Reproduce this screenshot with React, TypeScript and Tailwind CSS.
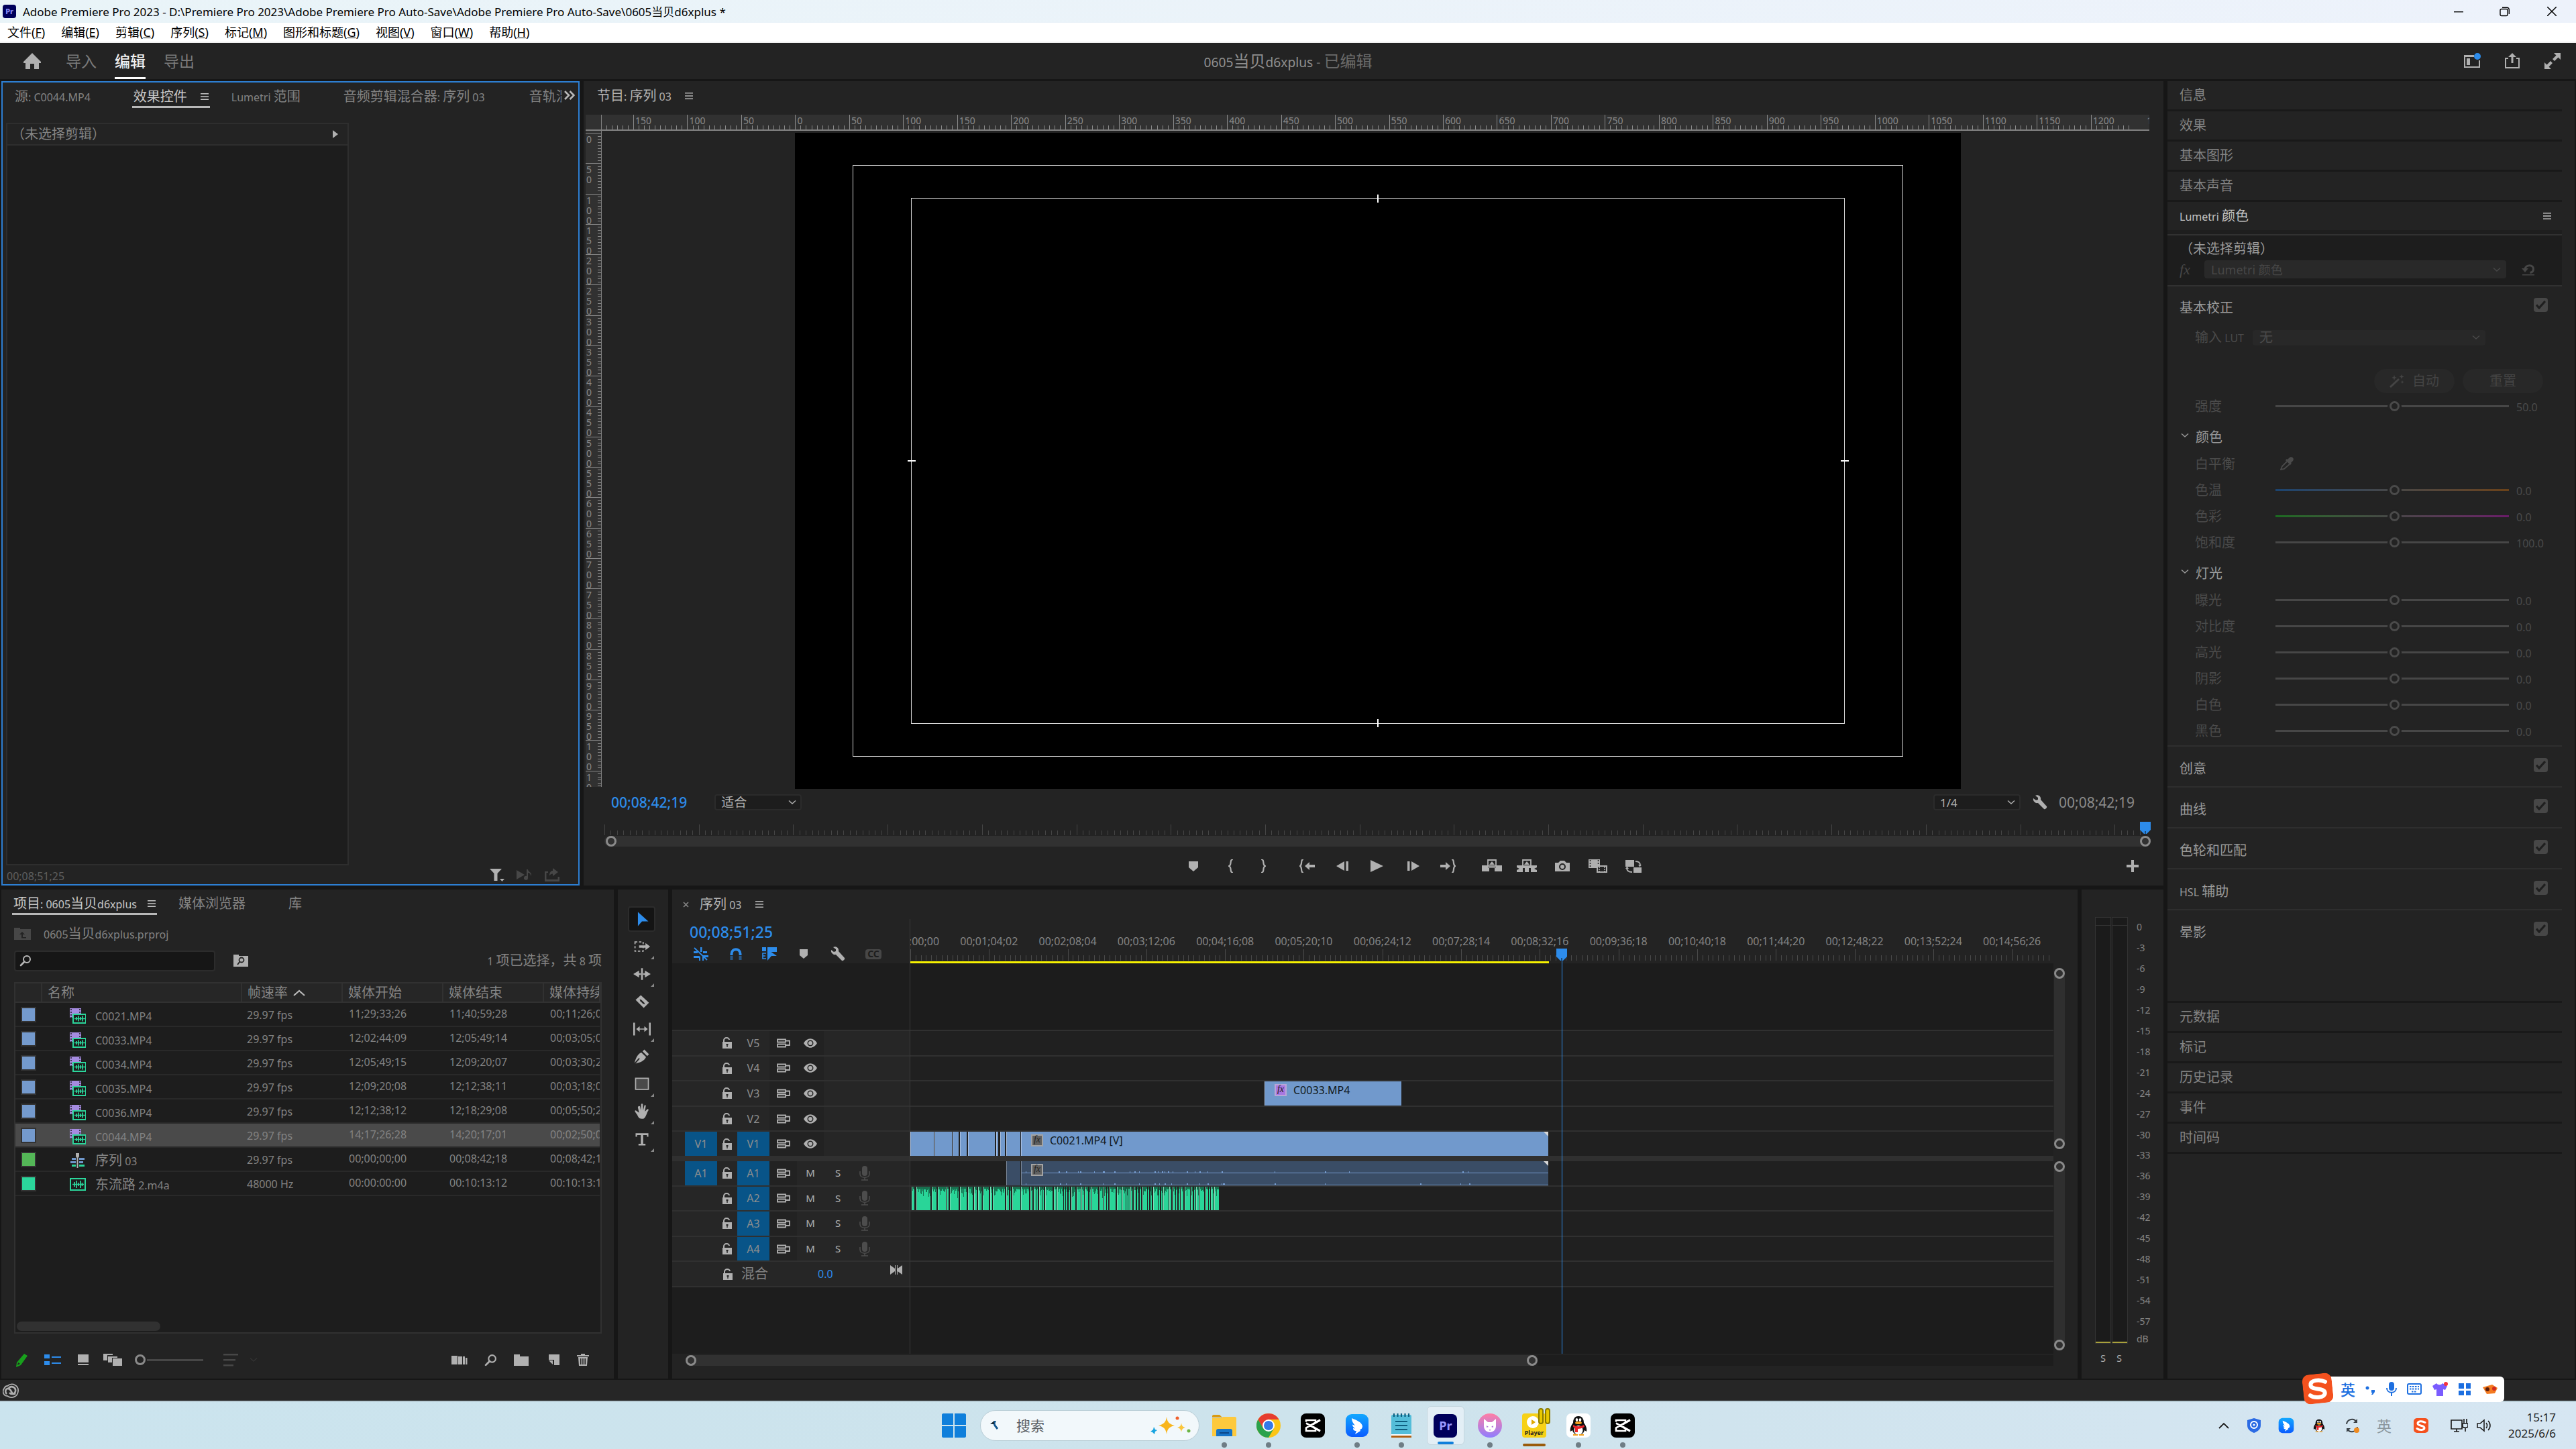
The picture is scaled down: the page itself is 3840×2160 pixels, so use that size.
import type { ReactNode } from "react";
import clsx from "clsx";

type Kids = { children?: ReactNode };

/* Latin glyphs run one step smaller than the CJK glyphs beside them. */
function Mix({ text }: { text: string }) {
  const parts = text.split(/([\u3000-\u9fff\uff00-\uffef]+)/).filter(Boolean);
  return (
    <span className="whitespace-pre">
      {parts.map((part, i) =>
        /[\u3000-\u9fff\uff00-\uffef]/.test(part) ? (
          <span key={i}>{part}</span>
        ) : (
          <span key={i} className="text-[0.8em]">
            {part}
          </span>
        ),
      )}
    </span>
  );
}

function Icon({
  w = 20,
  h = 20,
  vb,
  className,
  children,
}: Kids & { w?: number; h?: number; vb?: string; className?: string }) {
  return (
    <svg
      width={w}
      height={h}
      viewBox={vb ?? `0 0 ${w} ${h}`}
      fill="currentColor"
      className={clsx("shrink-0", className)}
      aria-hidden="true"
    >
      {children}
    </svg>
  );
}

function Burger() {
  return (
    <Icon w={12} h={12}>
      <path d="M0 1h12v1.6H0zM0 5.2h12v1.6H0zM0 9.4h12V11H0z" />
    </Icon>
  );
}

function Chevron({ className }: { className?: string }) {
  return (
    <Icon w={12} h={8} className={className}>
      <path d="M1 1.5l5 4.5 5-4.5" fill="none" stroke="currentColor" strokeWidth="1.5" />
    </Icon>
  );
}

function Ring() {
  return <span className="size-4 shrink-0 rounded-full border-3 border-[#8a8a8a]" />;
}

function Magnifier({ size = 18 }: { size?: number }) {
  return (
    <Icon w={size} h={size} vb="0 0 18 18">
      <circle cx="11" cy="7" r="5" fill="none" stroke="currentColor" strokeWidth="2" />
      <path d="M7.5 10.5L2 16" stroke="currentColor" strokeWidth="2.6" strokeLinecap="round" />
    </Icon>
  );
}

function Wrench() {
  return (
    <Icon w={22} h={22}>
      <path d="M1 5l4 3 3-1V4L4 1c4-2 9 1 8 6l9 10c1 2-2 5-4 4L8 12c-4 1-8-3-7-7z" />
    </Icon>
  );
}

const MENUS = [
  ["文件", "F"],
  ["编辑", "E"],
  ["剪辑", "C"],
  ["序列", "S"],
  ["标记", "M"],
  ["图形和标题", "G"],
  ["视图", "V"],
  ["窗口", "W"],
  ["帮助", "H"],
];

function TitleBar() {
  return (
    <header className="shrink-0 text-black">
      <div className="flex h-[34px] items-center bg-gradient-to-r from-[#e9f4f8] to-[#edf2fb] pl-1">
        <span className="flex h-5 w-5 items-center justify-center rounded bg-[#00005b] text-[11px] font-bold text-[#9999ff]">
          Pr
        </span>
        <h1 className="ml-2.5 text-[17px] leading-none">
          Adobe Premiere Pro 2023 - D:\Premiere Pro 2023\Adobe Premiere Pro Auto-Save\Adobe Premiere Pro
          Auto-Save\0605当贝d6xplus *
        </h1>
        <div className="ml-auto flex">
          <button aria-label="最小化" className="flex h-8 w-[69px] items-center justify-center">
            <Icon w={14} h={14}>
              <path d="M0 7h14v1.4H0z" />
            </Icon>
          </button>
          <button aria-label="还原" className="flex h-8 w-[69px] items-center justify-center">
            <Icon w={15} h={15}>
              <path
                d="M1 5.5a2 2 0 012-2h7a2 2 0 012 2v6a2 2 0 01-2 2H3a2 2 0 01-2-2zM4 1.2h7a3.5 3.5 0 013.3 3.5v6.3"
                fill="none"
                stroke="currentColor"
                strokeWidth="1.4"
              />
            </Icon>
          </button>
          <button aria-label="关闭" className="flex h-8 w-[72px] items-center justify-center">
            <Icon w={14} h={14}>
              <path d="M0 0l14 14M14 0L0 14" stroke="currentColor" strokeWidth="1.5" />
            </Icon>
          </button>
        </div>
      </div>
      <nav className="flex h-[30px] items-center gap-6 border-b-2 border-[#f0f0f0] bg-white pl-[11px] text-[18px] leading-none">
        {MENUS.map(([label, key]) => (
          <button key={key}>
            {label}(<u>{key}</u>)
          </button>
        ))}
      </nav>
    </header>
  );
}

function WorkspaceBar() {
  return (
    <div className="grid h-[54px] shrink-0 grid-cols-3 items-center bg-[#232323] text-[23px] leading-none text-[#7b7b7b]">
      <nav className="flex h-full items-center gap-[27px] pl-[35px]">
        <button aria-label="主页" className="mr-[10px] text-[#b0b0b0]">
          <Icon w={26} h={24}>
            <path d="M13 0l13 13v2h-3v9h-7v-8h-6v8H3v-9H0v-2z" />
          </Icon>
        </button>
        <button>导入</button>
        <button className="h-full border-y-3 border-t-transparent border-b-white font-medium text-[#efefef]">
          编辑
        </button>
        <button>导出</button>
      </nav>
      <p className="text-center text-[24px] text-[#8f8f8f]">
        <Mix text="0605当贝d6xplus" />
        <span className="text-[#6a6a6a]">
          <Mix text=" - 已编辑" />
        </span>
      </p>
      <div className="flex items-center justify-end gap-[34px] pr-[22px] text-[#b0b0b0]">
        <button aria-label="工作区">
          <Icon w={26} h={24}>
            <path d="M1 3h15v3H3v14h20V11h2v11H1z" />
            <path d="M5 8h5v10H5z" />
            <circle cx="21" cy="5" r="5" fill="#2d8ceb" />
          </Icon>
        </button>
        <button aria-label="快速导出">
          <Icon w={26} h={24}>
            <path d="M13 0l6 6h-4.5v9h-3V6H7zM2 7h5v2H4v12h18V9h-3V7h5v16H2z" />
          </Icon>
        </button>
        <button aria-label="最大化视频输出">
          <Icon w={26} h={26}>
            <path d="M15 1h10v10l-3.500-3.500L16 13l-3-3 5.500-5.500zM11 25H1V15l3.500 3.500L10 13l3 3-5.500 5.500z" />
          </Icon>
        </button>
      </div>
    </div>
  );
}

function Tab({ children, active }: Kids & { active?: boolean }) {
  return (
    <button
      className={clsx(
        "flex h-[38px] shrink-0 items-center gap-4 border-b-3 px-0.5 pt-1.5 text-[20px] leading-none whitespace-nowrap",
        active ? "border-[#b8b8b8] text-[#c8c8c8]" : "border-transparent text-[#838383]",
      )}
    >
      {children}
      {active && <Burger />}
    </button>
  );
}

function EffectControls() {
  return (
    <section className="flex min-h-0 min-w-0 flex-col border-2 border-[#2d7fd3] bg-[#232323]">
      <div className="flex h-[60px] shrink-0 items-start overflow-hidden pr-[5px] pl-4">
        <Tab>
          <Mix text="源: C0044.MP4" />
        </Tab>
        <div className="ml-[60px]">
          <Tab active>
            <span className="mr-1">效果控件</span>
          </Tab>
        </div>
        <div className="ml-[30px]">
          <Tab>
            <Mix text="Lumetri 范围" />
          </Tab>
        </div>
        <div className="ml-[60px]">
          <Tab>
            <Mix text="音频剪辑混合器: 序列 03" />
          </Tab>
        </div>
        <div className="ml-[62px] min-w-0 flex-1 overflow-hidden">
          <Tab>音轨混合器</Tab>
        </div>
        <button aria-label="更多面板" className="mt-3 ml-1 text-[#b8b8b8]">
          <Icon w={16} h={14}>
            <path d="M1 1l6 6-6 6M8.500 1l6 6-6 6" fill="none" stroke="currentColor" strokeWidth="2.600" />
          </Icon>
        </button>
      </div>
      <div className="ml-[5px] flex w-[511px] flex-1 flex-col border-2 border-[#2e2e2e] bg-[#1d1d1d]">
        <div className="flex h-8 items-center justify-between border-b-2 border-[#2e2e2e] bg-[#232323] pr-3.5 pl-1.5 text-[20px] leading-none text-[#838383]">
          <span>（未选择剪辑）</span>
          <Icon w={8} h={12} className="text-[#b0b0b0]">
            <path d="M0 0l8 6-8 6z" />
          </Icon>
        </div>
      </div>
      <footer className="flex h-[28px] shrink-0 items-center pr-[28px] pl-1.5 text-[16px] text-[#5f5f5f]">
        <span className="mr-auto pt-1">00;08;51;25</span>
        <Icon w={22} h={20} className="text-[#b0b0b0]">
          <path d="M0 1h18l-6.500 7v11h-5V8zM15 16h7l-3.500 4z" />
        </Icon>
        <Icon w={24} h={20} className="ml-[18px] text-[#474747]">
          <path d="M0 3l12 7-12 7zM15 2h2c0 4 6 4 5 9h-1c0-3-2-4-4-4v8a3 3 0 11-2-3z" />
        </Icon>
        <Icon w={22} h={20} className="ml-[18px] text-[#474747]">
          <path d="M0 5h5v2H2.500v10h17v-4H22v7H0zM12 0l8 6-8 6V8.500c-2 0-4 1-5 3 0-5 2-7.500 5-7.500z" />
        </Icon>
      </footer>
    </section>
  );
}

/* Tick marks spaced `step` percent apart; every `every`-th is a tall one. */
function Ticks({
  count,
  step,
  every,
  offset = 0,
  short = 6,
  tall = 24,
  vertical,
}: {
  count: number;
  step: number;
  every: number;
  offset?: number;
  short?: number;
  tall?: number;
  vertical?: boolean;
}) {
  return (
    <svg className="absolute inset-0 size-full" shapeRendering="crispEdges" aria-hidden="true">
      {Array.from({ length: count }, (_, i) => {
        const p = offset + i * step;
        const len = i % every === 0 ? tall : short;
        return vertical ? (
          <rect key={i} y={`${p}%`} x={24 - len} width={len} height="1" fill="currentColor" />
        ) : (
          <rect key={i} x={`${p}%`} y={tall - len} height={len} width="1" fill="currentColor" />
        );
      })}
    </svg>
  );
}

const RULER_X = Array.from({ length: 29 }, (_, i) => Math.abs(i * 50 - 150));
const RULER_Y = Array.from({ length: 22 }, (_, i) => i * 50);

function SafeMargins() {
  return (
    <div className="relative h-full aspect-video bg-black">
      <svg className="absolute inset-0 size-full" shapeRendering="crispEdges" aria-hidden="true">
        <g fill="none" stroke="#d8d8d8">
          <rect x="5%" y="5%" width="90%" height="90%" />
          <rect x="10%" y="10%" width="80%" height="80%" />
        </g>
        <g stroke="#ffffff" strokeWidth="2">
          <svg x="50%" y="10%" overflow="visible">
            <path d="M0-6V6" />
          </svg>
          <svg x="50%" y="90%" overflow="visible">
            <path d="M0-6V6" />
          </svg>
          <svg x="10%" y="50%" overflow="visible">
            <path d="M-6 0H6" />
          </svg>
          <svg x="90%" y="50%" overflow="visible">
            <path d="M-6 0H6" />
          </svg>
        </g>
      </svg>
    </div>
  );
}

const TRANSPORT: { label: string; w: number; gap: number; icon: ReactNode }[] = [
  { label: "添加标记", w: 14, gap: 0, icon: <path d="M0 3h14v9l-7 6-7-6z" /> },
  {
    label: "标记入点",
    w: 8,
    gap: 45,
    icon: <path d="M7 0C1 0 6 8 1 10c5 2 0 10 6 10" fill="none" stroke="currentColor" strokeWidth="2.200" />,
  },
  {
    label: "标记出点",
    w: 8,
    gap: 40,
    icon: <path d="M1 0c6 0 1 8 6 10-5 2 0 10-6 10" fill="none" stroke="currentColor" strokeWidth="2.200" />,
  },
  {
    label: "转到入点",
    w: 24,
    gap: 50,
    icon: (
      <>
        <path d="M6 0C1 0 5 8 1 10c4 2 0 10 5 10" fill="none" stroke="currentColor" strokeWidth="2.200" />
        <path d="M8 10l7-6v4h8v4h-8v4z" />
      </>
    ),
  },
  { label: "后退一帧", w: 18, gap: 31, icon: <path d="M0 10l12-7v14zM14.500 3H18v14h-3.500z" /> },
  { label: "播放", w: 20, gap: 32, icon: <path d="M1 1l19 9-19 9z" /> },
  { label: "前进一帧", w: 18, gap: 36, icon: <path d="M18 10L6 3v14zM0 3h3.500v14H0z" /> },
  {
    label: "转到出点",
    w: 24,
    gap: 30,
    icon: (
      <>
        <path d="M18 0c5 0 1 8 5 10-4 2 0 10-5 10" fill="none" stroke="currentColor" strokeWidth="2.200" />
        <path d="M16 10L9 4v4H1v4h8v4z" />
      </>
    ),
  },
  {
    label: "提升",
    w: 30,
    gap: 39,
    icon: (
      <>
        <path d="M0 9h9v3h12V9h9v9H19v-5h-8v5H0z" />
        <path d="M9 1h12v9H9z" fill="none" stroke="currentColor" strokeWidth="1.800" />
        <path d="M15 3l4 5h-8z" />
      </>
    ),
  },
  {
    label: "提取",
    w: 30,
    gap: 22,
    icon: (
      <>
        <path d="M0 9h30v3l-4 2 4 2v3h-9v-6h-3v6h-6v-6H9v6H0v-3l4-2-4-2z" />
        <path d="M9 1h12v9H9z" fill="#232323" stroke="currentColor" strokeWidth="1.800" />
        <path d="M15 3l4 5h-8z" />
      </>
    ),
  },
  {
    label: "导出帧",
    w: 22,
    gap: 27,
    icon: (
      <>
        <path d="M0 5h5l3-3h6l3 3h5v13H0z" />
        <circle cx="11" cy="11" r="4" fill="none" stroke="#232323" strokeWidth="2" />
      </>
    ),
  },
  {
    label: "比较视图",
    w: 28,
    gap: 28,
    icon: (
      <>
        <path d="M0 0h17v13H0z" />
        <path d="M2.500 1v12M14.500 1v12" stroke="#232323" strokeWidth="1.500" strokeDasharray="2 2" />
        <path d="M13 10h14v9H13z" fill="#232323" stroke="currentColor" strokeWidth="2" />
        <path d="M16 11v8M24 11v8" stroke="currentColor" strokeWidth="1.500" strokeDasharray="2 1" />
      </>
    ),
  },
  {
    label: "切换代理",
    w: 24,
    gap: 27,
    icon: (
      <>
        <path d="M0 1h13v10H0zM12 12h12v8H12z" />
        <path d="M15 3c5 0 7 2 7 6M2 13c0 3 2 6 8 6" fill="none" stroke="currentColor" strokeWidth="1.800" />
        <path d="M19 8h5l-2.500 3.500zM0 14l2.500-3.500L5 14z" />
      </>
    ),
  },
];

function PlayheadMark({ className }: { className?: string }) {
  return (
    <Icon w={16} h={18} className={clsx("text-[#2d8ceb]", className)}>
      <path d="M0 0h16v12l-6 6H6l-6-6z" />
      <path d="M7.500 14h1v4h-1z" fill="#111" />
    </Icon>
  );
}

function DropDown({ label, options, className }: { label: string; options: string[]; className: string }) {
  return (
    <span className="relative flex items-center">
      <select aria-label={label} className={clsx("appearance-none", className)}>
        {options.map((o) => (
          <option key={o}>{o}</option>
        ))}
      </select>
      <Chevron className="pointer-events-none absolute right-2" />
    </span>
  );
}

function ProgramMonitor() {
  return (
    <section className="flex min-h-0 min-w-0 flex-col bg-[#232323]">
      <div className="flex h-[50px] shrink-0 items-center gap-5 pb-1.5 pl-5 text-[20px] leading-none text-[#b4b4b4]">
        <Mix text="节目: 序列 03" />
        <Burger />
      </div>
      <div className="mr-[21px] ml-[3px] flex h-6 shrink-0 bg-[#313131] text-[14px] leading-[17px] text-[#8a8a8a]">
        <div className="w-6 shrink-0 border-r border-b-2 border-[#808080]" />
        <div className="relative flex flex-1 overflow-hidden border-b-2 border-[#808080] pl-[46px]">
          <Ticks count={288} step={0.3488} every={10} offset={-1.451} short={8} />
          {RULER_X.map((n, i) => (
            <span key={i} className="w-[3.559%] shrink-0 pl-1">
              {n}
            </span>
          ))}
        </div>
      </div>
      <div className="flex min-h-0 flex-1">
        <div className="mb-[3px] ml-[3px] flex w-6 shrink-0 flex-col overflow-hidden border-r border-[#808080] bg-[#313131] pt-[3px]">
          <div className="relative min-h-0 flex-1 text-[14px] text-[#8a8a8a]">
            <Ticks vertical count={216} step={0.4643} every={10} />
            {RULER_Y.map((n) => (
              <div key={n} className="h-[4.643%] overflow-hidden pt-0.5 pl-px">
                {String(n)
                  .split("")
                  .map((d, i) => (
                    <span key={i} className="block leading-[15px]">
                      {d}
                    </span>
                  ))}
              </div>
            ))}
          </div>
        </div>
        <div className="mr-3.5 flex min-w-0 flex-1 justify-center pt-[3px]">
          <SafeMargins />
        </div>
      </div>
      <div className="flex h-10 shrink-0 items-center pr-[43px] pl-[41px] text-[21px] leading-none text-[#8a8a8a]">
        <span className="font-medium text-[#2d8ceb]">00;08;42;19</span>
        <div className="ml-[41px] text-[#b0b0b0]">
          <DropDown
            label="选择缩放级别"
            options={["适合"]}
            className="h-6 w-[130px] rounded-sm border-2 border-[#2b2b2b] bg-[#1d1d1d] pl-2 text-[19px] leading-none"
          />
        </div>
        <div className="ml-auto text-[#b0b0b0]">
          <DropDown
            label="选择回放分辨率"
            options={["1/4"]}
            className="h-6 w-[130px] rounded-sm border-2 border-[#2b2b2b] bg-[#1d1d1d] pl-2 text-[17px] leading-none"
          />
        </div>
        <button aria-label="设置" className="mr-[17px] ml-[18px] text-[#b0b0b0]">
          <Wrench />
        </button>
        <span>00;08;42;19</span>
      </div>
      <div className="relative mt-[13px] mr-[21px] mb-px ml-[31px] h-4 shrink-0 text-[#454545]">
        <Ticks count={245} step={0.4073} every={15} short={7} tall={16} />
        <PlayheadMark className="absolute -top-1 -right-0.5" />
      </div>
      <div className="mr-[19px] ml-[31px] flex h-4 shrink-0 items-center justify-between rounded-full bg-[#313131] pl-0.5">
        <Ring />
        <Ring />
      </div>
      <div className="flex h-[58px] shrink-0 items-center text-[#b0b0b0]">
        <div className="w-[38.3%] shrink-0" />
        {TRANSPORT.map((t) => (
          <button key={t.label} aria-label={t.label} style={{ marginLeft: t.gap }}>
            <Icon w={t.w} h={20}>
              {t.icon}
            </Icon>
          </button>
        ))}
        <button aria-label="按钮编辑器" className="mr-[37px] ml-auto">
          <Icon w={18} h={18}>
            <path d="M7 0h4v7h7v4h-7v7H7v-7H0V7h7z" />
          </Icon>
        </button>
      </div>
    </section>
  );
}

function ClipIcon() {
  return (
    <Icon w={24} h={24}>
      <path d="M0 1h17v14H0z" fill="#a58be0" />
      <path d="M2 2v13M15 2v7" stroke="#1d1d1d" strokeWidth="1.500" strokeDasharray="2 2" />
      <path d="M5 10h19v13H5z" fill="#1d1d1d" stroke="#2bd69b" strokeWidth="2" />
      <path d="M7 16.500h16M10 14v5M13 12.500v8M16 14v5M19 12.500v8" stroke="#2bd69b" strokeWidth="1.700" />
    </Icon>
  );
}

function SequenceIcon() {
  return (
    <Icon w={24} h={24}>
      <path d="M3 8h6v3H3zM14 8h8v3h-8z" fill="#6f97cb" />
      <path d="M1 13h8v3H1zM14 13h6v3h-6z" fill="#6f97cb" />
      <path d="M3 18h6v3H3zM14 18h8v3h-8z" fill="#2bd69b" />
      <path d="M9 1h5v5l-1.500 2v15h-2V8L9 6z" fill="#b0b0b0" />
    </Icon>
  );
}

function AudioIcon() {
  return (
    <Icon w={24} h={20}>
      <path d="M1 1h22v17H1z" fill="#1d1d1d" stroke="#2bd69b" strokeWidth="2" />
      <path d="M4 9.500h17M7 6v7M10 4v11M13 7v5M16 4v11M18.500 7v5" stroke="#2bd69b" strokeWidth="1.700" />
    </Icon>
  );
}

const CLIPS = [
  { name: "C0021.MP4", rate: "29.97 fps", start: "11;29;33;26", end: "11;40;59;28", length: "00;11;26;03" },
  { name: "C0033.MP4", rate: "29.97 fps", start: "12;02;44;09", end: "12;05;49;14", length: "00;03;05;06" },
  { name: "C0034.MP4", rate: "29.97 fps", start: "12;05;49;15", end: "12;09;20;07", length: "00;03;30;23" },
  { name: "C0035.MP4", rate: "29.97 fps", start: "12;09;20;08", end: "12;12;38;11", length: "00;03;18;04" },
  { name: "C0036.MP4", rate: "29.97 fps", start: "12;12;38;12", end: "12;18;29;08", length: "00;05;50;27" },
  { name: "C0044.MP4", rate: "29.97 fps", start: "14;17;26;28", end: "14;20;17;01", length: "00;02;50;04" },
  { name: "序列 03", rate: "29.97 fps", start: "00;00;00;00", end: "00;08;42;18", length: "00;08;42;19" },
  { name: "东流路 2.m4a", rate: "48000 Hz", start: "00:00:00:00", end: "00:10:13:12", length: "00:10:13:13" },
];

function ProjectPanel() {
  return (
    <section className="flex min-h-0 min-w-0 flex-col bg-[#232323] text-[20px] leading-none text-[#838383]">
      <div className="flex h-[49px] shrink-0 items-start pl-4">
        <Tab active>
          <Mix text="项目: 0605当贝d6xplus" />
        </Tab>
        <div className="ml-[30px]">
          <Tab>媒体浏览器</Tab>
        </div>
        <div className="ml-[60px]">
          <Tab>库</Tab>
        </div>
      </div>
      <div className="flex h-[33px] shrink-0 items-center gap-[19px] pl-[19px]">
        <Icon w={25} h={20} className="text-[#474747]">
          <path d="M0 1h9v2h16v16H0z" />
          <path d="M8 11l4-4 4 4h-3v4h5v1.500h-7V11z" fill="#232323" />
        </Icon>
        <Mix text="0605当贝d6xplus.prproj" />
      </div>
      <div className="flex h-[48px] shrink-0 items-center pr-[18px] pl-[19px]">
        <label className="flex h-[31px] w-[300px] items-center gap-2 rounded border-2 border-[#2c2c2c] bg-[#161616] px-1.5 text-[#b8b8b8]">
          <Magnifier />
          <input aria-label="搜索" type="text" className="w-full bg-transparent text-[16px] outline-none" />
        </label>
        <button aria-label="从查询创建新的搜索素材箱" className="ml-[27px] text-[#b0b0b0]">
          <Icon w={22} h={18}>
            <path d="M0 0h8v2h14v16H0z" />
            <circle cx="12" cy="8" r="3.500" fill="none" stroke="#232323" strokeWidth="1.800" />
            <path d="M9.500 10.500L6 15" stroke="#232323" strokeWidth="2" />
          </Icon>
        </button>
        <span className="ml-auto">
          <Mix text="1 项已选择，共 8 项" />
        </span>
      </div>
      <div className="mt-2 mr-[18px] ml-[19px] flex min-h-0 flex-1 flex-col justify-between overflow-hidden border-2 border-[#313131] bg-[#1d1d1d]">
        <table className="w-full table-fixed border-collapse text-left">
          <colgroup>
            <col className="w-[39px]" />
            <col />
            <col className="w-[150px]" />
            <col className="w-[150px]" />
            <col className="w-[150px]" />
            <col className="w-[84px]" />
          </colgroup>
          <thead>
            <tr className="h-7 border-b-2 border-[#313131] bg-[#262626] *:border-r-2 *:border-[#313131] *:pl-2 *:font-normal *:whitespace-nowrap">
              <th />
              <th>名称</th>
              <th>
                <span className="flex items-center gap-2">
                  帧速率
                  <Icon w={18} h={10} className="text-[#b8b8b8]">
                    <path d="M1 9l8-7 8 7" fill="none" stroke="currentColor" strokeWidth="2.200" />
                  </Icon>
                </span>
              </th>
              <th>媒体开始</th>
              <th>媒体结束</th>
              <th className="overflow-hidden">媒体持续时间</th>
            </tr>
          </thead>
          <tbody className="text-[16px]">
            {CLIPS.map((clip, i) => (
              <tr
                key={clip.name}
                className={clsx(
                  "h-9 border-b-2 border-[#292929] *:whitespace-nowrap",
                  i === 5 && "bg-[#4a4a4a]",
                )}
              >
                <td className="pl-2">
                  <span
                    className={clsx(
                      "block size-[23px] border-2 border-[#333333]",
                      i < 6 ? "bg-[#749acd]" : i === 6 ? "bg-[#54b757]" : "bg-[#2bd69b]",
                    )}
                  />
                </td>
                <td className="pl-[42px]">
                  <span className="flex items-center gap-3.5 pt-1 text-[20px]">
                    {i < 6 ? <ClipIcon /> : i === 6 ? <SequenceIcon /> : <AudioIcon />}
                    <Mix text={clip.name} />
                  </span>
                </td>
                <td className="pt-0.5 pl-2">{clip.rate}</td>
                <td className="pb-0.5 pl-2.5">{clip.start}</td>
                <td className="pb-0.5 pl-2.5">{clip.end}</td>
                <td className="overflow-hidden pb-0.5 pl-2.5">{clip.length}</td>
              </tr>
            ))}
          </tbody>
        </table>
        <div className="m-0.5 h-3.5 w-[214px] rounded-full bg-[#313131]" />
      </div>
      <footer className="flex h-[67px] shrink-0 items-center pt-[11px] pr-[37px] pl-5 text-[#b0b0b0]">
        <Icon w={22} h={22} className="text-[#18a01c]">
          <path d="M14 2l5 3L9 19l-7 3 1-7zM5 15l-1 4 4-2z" fillRule="evenodd" />
        </Icon>
        <Icon w={26} h={18} className="ml-[22px] text-[#2d8ceb]">
          <path d="M0 1h8v6H0zM0 11h8v6H0zM11 4h14v2H11zM11 13h14v2H11z" />
        </Icon>
        <Icon w={16} h={18} className="ml-[24px]">
          <path d="M0 1h16v12H0zM0 15h16v2H0z" />
        </Icon>
        <Icon w={28} h={18} className="ml-[22px]">
          <path d="M0 0h14v2H6v8H0zM7 4h14v2h-8v7H7zM14 7h14v11H14z" />
        </Icon>
        <span className="ml-[19px] flex items-center gap-0.5">
          <Ring />
          <span className="h-[3px] w-[84px] bg-[#474747]" />
        </span>
        <Icon w={22} h={20} className="ml-[30px] text-[#474747]">
          <path d="M0 1h22v2.500H0zM0 9h18v2.500H0zM0 17h15v2.500H0z" />
        </Icon>
        <Chevron className="ml-[17px] text-[#333333]" />
        <div className="ml-auto flex items-center gap-[25px]">
          <Icon w={24} h={14}>
            <path d="M0 1h9v13H0zM10 2h6v12h-6zM17 2h3v12h-3zM21 4h2.500v10H21z" />
          </Icon>
          <Magnifier size={19} />
          <Icon w={22} h={17}>
            <path d="M0 0h9v3h13v14H0z" />
          </Icon>
          <Icon w={18} h={18} className="ml-1">
            <path d="M1 1h16v16H9V9H1zM1 10h6v6z" />
          </Icon>
          <Icon w={18} h={20}>
            <path d="M6 1h6v2h6v2H0V3h6zM2 6h14l-1 13H3zm3 2v9h1.500V8zm3.200 0v9h1.500V8zm3.200 0v9H13V8z" fillRule="evenodd" />
          </Icon>
        </div>
      </footer>
    </section>
  );
}

const TOOLS: { label: string; corner: boolean; icon: ReactNode }[] = [
  { label: "选择工具", corner: false, icon: <path d="M8 3l18 16H15L8 27z" /> },
  {
    label: "向前选择轨道工具",
    corner: true,
    icon: (
      <>
        <path d="M3 7h14v16H3z" fill="none" stroke="currentColor" strokeWidth="2" strokeDasharray="4 3" />
        <path d="M10 13h11V9l8 6-8 6v-4H10z" />
      </>
    ),
  },
  {
    label: "波纹编辑工具",
    corner: true,
    icon: <path d="M13.500 5h3v20h-3zM0 15l10-6v4.500h3v3h-3V21zM30 15l-10-6v4.500h-3v3h3V21z" />,
  },
  {
    label: "剃刀工具",
    corner: false,
    icon: (
      <>
        <path d="M13 4l14 13-9 9L4 12z" />
        <path d="M11 11l3 1 5 5 1 3-3-1-5-5z" fill="#232323" />
      </>
    ),
  },
  {
    label: "外滑工具",
    corner: true,
    icon: <path d="M0 4h3v22H0zM27 4h3v22h-3zM5 15l6-5v4h8v-4l6 5-6 5v-4h-8v4z" />,
  },
  {
    label: "钢笔工具",
    corner: false,
    icon: (
      <>
        <path d="M19 3l8 8-3 3-8-8zM14 8l8 8c-3 6-8 9-18 11l7-8-1-2-8 9C5 16 8 10 14 8z" />
      </>
    ),
  },
  {
    label: "矩形工具",
    corner: true,
    icon: <path d="M4 5h22v19H4z" fill="#4a4a4a" stroke="currentColor" strokeWidth="2" />,
  },
  {
    label: "手形工具",
    corner: true,
    icon: (
      <path d="M9 6c2-1 3 0 3 2l1 5 .500-10c0-2 3-2 3 0l.500 10 2-8c.500-2 3-1.500 2.500.500L20 15l4-4c1.500-1 3 .500 2 2-3 4-4 12-8 14-5 1-8 0-10-4-1-3-4-6-5-8s1-3 3-1l4 3-2-9c0-1 0-2 1-2z" />
    ),
  },
  { label: "文字工具", corner: true, icon: <path d="M4 5h22v6h-2.500V8H17v15h4v3H9v-3h4V8H6.500v3H4z" /> },
];

function ToolStrip() {
  return (
    <section aria-label="工具" className="flex flex-col items-center gap-[3px] bg-[#232323] pt-[25px] pr-1">
      {TOOLS.map((tool, i) => (
        <button
          key={tool.label}
          aria-label={tool.label}
          className={clsx(
            "relative flex h-[38px] w-[41px] items-center justify-center rounded",
            i === 0 ? "border-2 border-[#2c2c2c] bg-[#141414] text-[#2d8ceb]" : "text-[#b0b0b0]",
          )}
        >
          <Icon w={28} h={26} vb="0 0 30 30">
            {tool.icon}
          </Icon>
          {tool.corner && (
            <Icon w={5} h={5} className="absolute right-0.5 bottom-0 text-[#8a8a8a]">
              <path d="M5 0v5H0z" />
            </Icon>
          )}
        </button>
      ))}
    </section>
  );
}

function Lock() {
  return (
    <Icon w={14} h={17}>
      <path d="M2 7V5a4 4 0 014-4c3 0 4 2 4 3" fill="none" stroke="currentColor" strokeWidth="2" />
      <path d="M0 7h14v10H0z" />
      <path d="M5.500 10h3v2l-.800.500V15H6.300v-2.500L5.500 12z" fill="#262626" />
    </Icon>
  );
}

function SyncLock() {
  return (
    <Icon w={20} h={14}>
      <g fill="none" stroke="currentColor" strokeWidth="1.800">
        <path d="M1 1.500h12v4H1zM1 8.500h12v4H1z" />
        <path d="M13 3.500h6v6.500h-6" />
      </g>
    </Icon>
  );
}

function Eye() {
  return (
    <Icon w={20} h={14}>
      <path d="M0 7c5-9 15-9 20 0-5 9-15 9-20 0zM10 2.500a4.500 4.500 0 100 9 4.500 4.500 0 000-9z" fillRule="evenodd" />
      <circle cx="10" cy="7" r="3" />
    </Icon>
  );
}

function Mic() {
  return (
    <Icon w={16} h={22}>
      <rect x="4" y="0" width="8" height="15" rx="4" />
      <path d="M1 8v4c0 7 14 7 14 0V8M8 17v4M3 21h10" fill="none" stroke="currentColor" strokeWidth="1.500" />
    </Icon>
  );
}

function TrackHeader({ name, source, target }: { name: string; source?: boolean; target?: boolean }) {
  const audio = name.startsWith("A");
  return (
    <div className="flex min-h-0 flex-1 items-stretch border-b-2 border-[#303030] bg-[#262626] pl-[19px] text-[16px] leading-none text-[#8f8f8f] *:flex *:shrink-0 *:items-center *:justify-center">
      <button className={clsx("w-12", source && "bg-[#085488]")}>{source && name}</button>
      <button aria-label={`切换轨道锁定 ${name}`} className="w-[30px] text-[#b0b0b0]">
        <Lock />
      </button>
      <button className={clsx("w-12", target && "bg-[#085488]")}>{name}</button>
      <button aria-label={`同步锁定 ${name}`} className="w-[41px] bg-[#222222] text-[#b0b0b0]">
        <SyncLock />
      </button>
      {audio ? (
        <>
          <button className="w-10 text-[15px] text-[#b0b0b0]">M</button>
          <button className="w-[42px] text-[15px] text-[#b0b0b0]">S</button>
          <button aria-label={`画外音录制 ${name}`} className="w-[38px] text-[#4d4d4d]">
            <Mic />
          </button>
        </>
      ) : (
        <button aria-label={`切换轨道输出 ${name}`} className="w-10 bg-[#222222] text-[#b0b0b0]">
          <Eye />
        </button>
      )}
    </div>
  );
}

function FxBadge({ accent }: { accent?: boolean }) {
  return (
    <span
      className={clsx(
        "flex size-[18px] items-center justify-center border-2 pb-0.5 font-['Liberation_Serif',serif] text-[14px] leading-none italic text-[#222222]",
        accent ? "border-[#b9a6d8] bg-[#a876e0]" : "border-[#a3a3a3] bg-[#606060]",
      )}
    >
      fx
    </span>
  );
}

/* Every position on the canvas is in timeline units; 1704 of them span it. */
const SPAN = 1704;
const pct = (n: number) => `${(n / SPAN) * 100}%`;

const V1_CUTS = [
  [0, 35],
  [36, 26],
  [63, 9],
  [74, 10],
  [86, 40],
  [128, 3],
  [134, 7],
  [143, 21],
];

const TIMES = [
  "00;00;00;00",
  "00;01;04;02",
  "00;02;08;04",
  "00;03;12;06",
  "00;04;16;08",
  "00;05;20;10",
  "00;06;24;12",
  "00;07;28;14",
  "00;08;32;16",
  "00;09;36;18",
  "00;10;40;18",
  "00;11;44;20",
  "00;12;48;22",
  "00;13;52;24",
  "00;14;56;26",
];

const MUSIC_HEAD = [
  [2, 4],
  [9, 21],
  [32, 7],
  [41, 12],
  [54, 3],
  [59, 13],
  [74, 10],
  [86, 7],
  [95, 4],
  [101, 4],
  [106, 1],
  [108, 9],
  [119, 3],
  [123, 18],
  [143, 4],
  [149, 1],
  [152, 12],
  [165, 12],
];

function MusicWave() {
  let seed = 11;
  const next = () => (seed = (seed * 73 + 41) % 1009) / 1009;
  const blocks = MUSIC_HEAD.map((b) => [...b]);
  for (let x = 179; x < 458; ) {
    const w = Math.min(2 + Math.floor(next() * next() * 12), 463 - x);
    blocks.push([x, w]);
    x += w + 1 + Math.floor(next() * 2);
  }
  return (
    <svg
      className="absolute inset-y-0 left-0 h-full"
      style={{ width: pct(464) }}
      viewBox="0 0 464 37"
      preserveAspectRatio="none"
      shapeRendering="crispEdges"
      aria-hidden="true"
    >
      {blocks.map(([x, w]) => (
        <g key={x}>
          <rect x={x} width={w} height="37" fill="#17704f" />
          {Array.from({ length: w }, (_, i) => {
            const top = 3 + Math.floor(next() * next() * 16);
            return <rect key={i} x={x + i} y={top} width="1" height={37 - top} fill="#29d598" />;
          })}
          {w > 2 && <rect x={x} width="1" height="37" fill="#7fdcb8" />}
        </g>
      ))}
    </svg>
  );
}

const PEAKS_A = [6, 55, 56, 66, 84, 87, 108, 121, 123, 138, 161, 168, 175, 198, 203, 209, 213, 218, 225, 246, 258, 265, 277, 298, 377, 453, 489, 658, 666];
const PEAKS_B = [6, 57, 66, 87, 121, 138, 175, 198, 205, 213, 223, 246, 265, 277, 298, 300, 302, 377, 453, 595, 655, 668];

function A1Wave() {
  return (
    <svg
      className="absolute inset-0 size-full"
      viewBox="0 0 786 36"
      preserveAspectRatio="none"
      shapeRendering="crispEdges"
      fill="#749acd"
      aria-hidden="true"
    >
      <path d="M0 17h786v1H0zM0 35h786v1H0z" />
      {PEAKS_A.map((x, i) => (
        <rect key={x} x={x} y={15} width={1 + (i % 2)} height="2" />
      ))}
      {PEAKS_B.map((x, i) => (
        <rect key={x} x={x} y={33} width={1 + (i % 2)} height="2" />
      ))}
    </svg>
  );
}

function Lane({ children }: Kids) {
  return <div className="relative min-h-0 flex-1 border-b-2 border-[#303030] bg-[#202020]">{children}</div>;
}

function Clip({
  from,
  length,
  tone,
  children,
}: Kids & { from: number; length: number; tone: "video" | "audio" }) {
  return (
    <div
      className={clsx(
        "absolute inset-y-0 flex items-start gap-2.5 overflow-hidden border-l text-[16px] leading-none text-[#101820]",
        tone === "video" ? "border-[#a9c0e2] bg-[#7199cc]" : "border-[#7a8798] bg-[#3a4d66]",
      )}
      style={{ left: pct(from), width: pct(length) }}
    >
      {children}
    </div>
  );
}

function ScrollColumn() {
  return (
    <div className="flex w-4 flex-1 flex-col justify-between rounded-full bg-[#2f2f2f]">
      <Ring />
      <Ring />
    </div>
  );
}

function Timeline() {
  return (
    <section className="flex min-h-0 min-w-0 flex-col bg-[#232323]">
      <div className="flex h-11 shrink-0 items-center pl-4 text-[20px] leading-none text-[#b4b4b4]">
        <button aria-label="关闭序列" className="mr-4 text-[#8a8a8a]">
          <Icon w={9} h={9}>
            <path d="M1 1l7 7M8 1L1 8" stroke="currentColor" strokeWidth="1.500" />
          </Icon>
        </button>
        <Mix text="序列 03" />
        <span className="ml-[21px]">
          <Burger />
        </span>
      </div>
      <div className="flex min-h-0 flex-1">
        <div className="flex w-[355px] shrink-0 flex-col border-r border-[#3a3a3a] bg-[#1d1d1d]">
          <div className="h-[66px] shrink-0 bg-[#232323] pl-[26px]">
            <div className="flex h-[38px] items-center text-[23px] leading-none font-medium text-[#2d8ceb]">
              00;08;51;25
            </div>
            <div className="flex h-7 items-center gap-[30px] pl-1.5 text-[#2d8ceb]">
              <Icon w={22} h={20}>
                <path d="M0 6h6v3H0zM0 13h8v3H0zM14 12h8v3h-8zM10 0h2.500v7H10zM14 6h6v3h-6zM8 13l2 1v6H8zM13 14h2v6h-2z" />
                <path d="M1 1l19 18" stroke="currentColor" strokeWidth="1.800" />
              </Icon>
              <Icon w={18} h={18} className="ml-0.5">
                <path d="M2.500 11V9c0-9 13-9 13 0v2" fill="none" stroke="currentColor" strokeWidth="4" />
                <path d="M.500 12h4v6h-4zM13.500 12h4v6h-4z" opacity=".5" />
              </Icon>
              <Icon w={22} h={20}>
                <path d="M0 0h6v6H0zM8 0h14v7H12L8 3zM8 3l14 10h-8l-6 7z" />
                <path d="M6 9H1v8h5M1 13h4" fill="none" stroke="currentColor" strokeWidth="1.600" />
              </Icon>
              <Icon w={12} h={14} className="ml-1 text-[#b0b0b0]">
                <path d="M0 0h12v9l-6 5-6-5z" />
              </Icon>
              <span className="ml-1 text-[#b0b0b0]">
                <Wrench />
              </span>
              <span className="flex h-[15px] w-6 items-center justify-center rounded-sm bg-[#474747] text-[14px] leading-none font-bold text-[#1d1d1d]">
                CC
              </span>
            </div>
          </div>
          <div className="flex-1 border-b-2 border-[#303030]" />
          <div className="flex h-[188px] shrink-0 flex-col">
            <TrackHeader name="V5" />
            <TrackHeader name="V4" />
            <TrackHeader name="V3" />
            <TrackHeader name="V2" />
            <TrackHeader name="V1" source target />
          </div>
          <div className="h-[6px] shrink-0 bg-[#303030]" />
          <div className="flex h-[188px] shrink-0 flex-col">
            <TrackHeader name="A1" source target />
            <TrackHeader name="A2" target />
            <TrackHeader name="A3" target />
            <TrackHeader name="A4" target />
            <div className="flex min-h-0 flex-1 items-center border-b-2 border-[#303030] bg-[#262626] pr-[11px] pl-[76px] text-[20px] leading-none text-[#838383]">
              <span className="text-[#b0b0b0]">
                <Lock />
              </span>
              <span className="ml-[13px]">混合</span>
              <span className="ml-[74px] text-[16px] text-[#2d8ceb]">0.0</span>
              <Icon w={18} h={14} className="mb-3 ml-auto text-[#b0b0b0]">
                <path d="M0 0l7 5V0h1v14H7V9l-7 5zM18 0l-7 5V0h-1v14h1V9l7 5z" />
              </Icon>
            </div>
          </div>
          <div className="flex-1" />
        </div>
        <div className="relative flex min-w-0 flex-1 flex-col overflow-hidden bg-[#1c1c1c]">
          <div className="h-[66px] shrink-0 bg-[#232323]">
            <div className="flex h-[45px] items-center pt-5 text-[16px] leading-none text-[#838383]">
              {TIMES.map((t) => (
                <span key={t} className="w-[6.884%] shrink-0">
                  <span className="inline-block -translate-x-1/2">{t}</span>
                </span>
              ))}
            </div>
            <div className="relative h-[17px] text-[#4a4a4a]">
              <Ticks count={218} step={0.4589} every={15} short={8} tall={17} />
            </div>
            <div className="mt-px h-[3px] bg-[#f7f200]" style={{ width: pct(952) }} />
          </div>
          <div className="flex-1 border-b-2 border-[#303030]" />
          <div className="flex h-[188px] shrink-0 flex-col">
            <Lane />
            <Lane />
            <Lane>
              <Clip from={528} length={204} tone="video">
                <span className="flex items-center gap-2.5 pt-1 pl-3.5">
                  <FxBadge accent />
                  C0033.MP4
                </span>
              </Clip>
            </Lane>
            <Lane />
            <Lane>
              {V1_CUTS.map(([from, length]) => (
                <Clip key={from} from={from} length={length} tone="video" />
              ))}
              <Clip from={165} length={786} tone="video">
                <span className="flex items-center gap-2.5 pt-1 pl-3.5">
                  <FxBadge />
                  C0021.MP4 [V]
                </span>
                <Icon w={7} h={7} className="absolute top-0 right-0 text-[#d8d8d8]">
                  <path d="M0 0h7v7z" />
                </Icon>
              </Clip>
            </Lane>
          </div>
          <div className="h-[6px] shrink-0 bg-[#303030]" />
          <div className="flex h-[188px] shrink-0 flex-col">
            <Lane>
              <Clip from={143} length={21} tone="audio" />
              <Clip from={165} length={786} tone="audio">
                <A1Wave />
                <span className="relative mt-1 ml-3.5">
                  <FxBadge />
                </span>
                <Icon w={7} h={7} className="absolute top-0 right-0 text-[#d8d8d8]">
                  <path d="M0 0h7v7z" />
                </Icon>
              </Clip>
            </Lane>
            <Lane>
              <MusicWave />
            </Lane>
            <Lane />
            <Lane />
            <Lane />
          </div>
          <div className="flex-1" />
          <div
            className="absolute inset-y-0 flex w-4 -translate-x-1/2 flex-col items-center pt-[44px]"
            style={{ left: pct(971) }}
          >
            <PlayheadMark />
            <span className="w-px flex-1 bg-[#2d8ceb]" />
          </div>
        </div>
        <div className="flex w-9 shrink-0 flex-col pt-[73px] pb-[5px] pl-px">
          <div className="flex flex-[270] flex-col">
            <ScrollColumn />
          </div>
          <div className="h-[18px]" />
          <div className="flex flex-[282] flex-col">
            <ScrollColumn />
          </div>
        </div>
      </div>
      <div className="flex h-[37px] shrink-0 items-start pt-0.5 pr-9 pl-5">
        <div className="flex h-4 w-[62.3%] items-center justify-between rounded-full bg-[#313131]">
          <Ring />
          <Ring />
        </div>
        <div className="h-4 flex-1 bg-[#1d1d1d]" />
      </div>
    </section>
  );
}

const DB_MARKS = Array.from({ length: 20 }, (_, i) => (i === 0 ? "0" : `-${i * 3}`));

function AudioMeters() {
  return (
    <section
      aria-label="音频仪表"
      className="flex min-h-0 flex-col bg-[#232323] pt-[41px] text-[14px] leading-none text-[#838383]"
    >
      <div className="flex min-h-0 flex-1 pl-5">
        {[0, 1].map((n) => (
          <div key={n} className="mr-px flex w-6 flex-col justify-between border border-[#333333] bg-[#1b1b1b]">
            <div className="h-3 border-b border-[#333333]" />
            <div className="h-0.5 bg-[#a8a03c]" />
          </div>
        ))}
        <div className="ml-3 flex flex-col">
          {DB_MARKS.map((m) => (
            <span key={m} className="flex min-h-0 flex-1 items-center">
              {m}
            </span>
          ))}
          <span className="h-[18px] shrink-0 pt-1">dB</span>
        </div>
      </div>
      <div className="flex h-[52px] shrink-0 pt-2.5 pl-5">
        <button className="flex h-6 w-6 items-center justify-center text-[#b0b0b0]">S</button>
        <button className="flex h-6 w-6 items-center justify-center text-[#b0b0b0]">S</button>
      </div>
    </section>
  );
}

function Collapsed({ title }: { title: string }) {
  return (
    <button className="flex h-[45px] w-full shrink-0 items-center border-b-3 border-[#191919] pl-[18px] text-[20px] leading-none text-[#838383]">
      {title}
    </button>
  );
}

function Check({ label }: { label: string }) {
  return (
    <span className="relative flex">
      <input
        type="checkbox"
        aria-label={label}
        defaultChecked
        className="size-[21px] appearance-none rounded-sm bg-[#474747]"
      />
      <Icon w={15} h={13} className="pointer-events-none absolute top-1 left-[3px] text-[#1f1f1f]">
        <path d="M1 6.500l4 4.500 9-10" fill="none" stroke="currentColor" strokeWidth="3.200" />
      </Icon>
    </span>
  );
}

const TRACKS = {
  plain: "[&::-webkit-slider-runnable-track]:bg-[#474747]",
  temp: "[&::-webkit-slider-runnable-track]:bg-linear-to-r [&::-webkit-slider-runnable-track]:from-[#1b4470] [&::-webkit-slider-runnable-track]:via-[#474747] [&::-webkit-slider-runnable-track]:to-[#6b4218]",
  tint: "[&::-webkit-slider-runnable-track]:bg-linear-to-r [&::-webkit-slider-runnable-track]:from-[#1a6b20] [&::-webkit-slider-runnable-track]:via-[#474747] [&::-webkit-slider-runnable-track]:to-[#6a1b68]",
};

function Slider({
  label,
  value,
  track = "plain",
  className = "h-[39px]",
}: {
  label: string;
  value: string;
  track?: keyof typeof TRACKS;
  className?: string;
}) {
  return (
    <label className={clsx("flex shrink-0 items-center pl-[41px] text-[20px] leading-none text-[#4a4a4a]", className)}>
      <span className="w-[120px] shrink-0">{label}</span>
      <input
        type="range"
        defaultValue={51}
        className={clsx(
          "h-4 min-w-0 flex-1 appearance-none bg-transparent [&::-webkit-slider-runnable-track]:h-[3px] [&::-webkit-slider-thumb]:mt-[-6px] [&::-webkit-slider-thumb]:size-[15px] [&::-webkit-slider-thumb]:appearance-none [&::-webkit-slider-thumb]:rounded-full [&::-webkit-slider-thumb]:border-3 [&::-webkit-slider-thumb]:border-[#4a4a4a] [&::-webkit-slider-thumb]:bg-[#232323] [&::-webkit-slider-thumb]:shadow-[0_0_0_3px_#232323]",
          TRACKS[track],
        )}
      />
      <span className="w-[79px] shrink-0 pt-0.5 pl-[11px] text-[16px]">{value}</span>
    </label>
  );
}

function SubHeading({ title }: { title: string }) {
  return (
    <button className="flex h-[47px] w-full shrink-0 items-center gap-2.5 pt-1.5 pl-5 text-[20px] leading-none text-[#9a9a9a]">
      <Chevron className="mb-1.5" />
      {title}
    </button>
  );
}

function Section({ title }: { title: string }) {
  return (
    <div className="flex h-[61px] shrink-0 items-center justify-between border-t-2 border-[#2e2e2e] pt-1.5 pr-[21px] pl-[18px] text-[20px] leading-none text-[#9a9a9a]">
      <Mix text={title} />
      <span className="mb-2.5">
        <Check label={title} />
      </span>
    </div>
  );
}

function LumetriStack() {
  return (
    <aside className="flex w-[607px] shrink-0 flex-col bg-[#232323] pr-[19px]">
      <Collapsed title="信息" />
      <Collapsed title="效果" />
      <Collapsed title="基本图形" />
      <Collapsed title="基本声音" />
      <div className="flex h-12 shrink-0 items-center justify-between border-b-6 border-[#1e1e1e] pr-4 pl-[18px] text-[20px] leading-none text-[#c4c4c4]">
        <Mix text="Lumetri 颜色" />
        <Burger />
      </div>
      <div className="flex h-[78px] shrink-0 flex-col border-y-2 border-[#313131] bg-[#1d1d1d] pt-2 pl-[18px]">
        <p className="text-[20px] leading-[23px] text-[#9a9a9a]">（未选择剪辑）</p>
        <div className="mt-1.5 flex items-center text-[#474747]">
          <span className="w-[37px] font-['Liberation_Serif',serif] text-[22px] leading-none italic">fx</span>
          <DropDown
            label="选择效果"
            options={["Lumetri 颜色"]}
            className="h-[27px] w-[450px] rounded bg-[#292929] pl-2.5 text-[18px] leading-none"
          />
          <button aria-label="重置效果" className="ml-[23px]">
            <Icon w={20} h={18}>
              <path d="M5 8C6 1 18 1 17.500 8c0 4-2 5-5 5.500" fill="none" stroke="currentColor" strokeWidth="3" />
              <path d="M0 7h10l-5 6zM1 16h18v1.500H1z" />
            </Icon>
          </button>
        </div>
      </div>
      <div className="flex h-[63px] shrink-0 items-center justify-between pr-[21px] pl-[18px] text-[20px] leading-none text-[#9a9a9a]">
        基本校正
        <span className="mb-2">
          <Check label="基本校正" />
        </span>
      </div>
      <div className="flex h-[26px] shrink-0 items-center pl-[41px] text-[20px] leading-none text-[#4a4a4a]">
        <span className="w-[86px]">
          <Mix text="输入 LUT" />
        </span>
        <DropDown
          label="输入 LUT"
          options={["无"]}
          className="h-[23px] w-[347px] rounded-sm bg-[#282828] pl-2.5 text-[20px] leading-none"
        />
      </div>
      <div className="mt-[34px] flex shrink-0 justify-end gap-3 pr-7 text-[20px] leading-none text-[#444444]">
        <button className="flex h-9 w-[120px] items-center justify-center gap-3 rounded-full bg-[#282828]">
          <Icon w={22} h={20}>
            <path d="M1 19L14 7" stroke="currentColor" strokeWidth="3" />
            <path d="M7 1l1 3 3 1-3 1-1 3-1-3-3-1 3-1zM18 0l1 2.500 2.500 1L19 4.500 18 7l-1-2.500-2.500-1 2.500-1zM19 9l.700 1.800L22 11.500l-2.300.700L19 14l-.700-1.800-2-.700 2-.700z" />
          </Icon>
          自动
        </button>
        <button className="h-9 w-[120px] rounded-full bg-[#282828]">重置</button>
      </div>
      <Slider label="强度" value="50.0" />
      <SubHeading title="颜色" />
      <div className="flex h-[39px] shrink-0 items-center pl-[41px] text-[20px] leading-none text-[#4a4a4a]">
        <span className="w-[127px]">白平衡</span>
        <Icon w={21} h={21}>
          <path d="M13 2c3-4 9-1 6 4l-3 3 1 1-2 2-7-7 2-2 1 1z" />
          <path d="M10 7L3 14l-2 5 5-1 8-7" fill="none" stroke="currentColor" strokeWidth="1.800" />
        </Icon>
      </div>
      <Slider label="色温" value="0.0" track="temp" />
      <Slider label="色彩" value="0.0" track="tint" />
      <Slider label="饱和度" value="100.0" />
      <SubHeading title="灯光" />
      <Slider label="曝光" value="0.0" />
      <Slider label="对比度" value="0.0" />
      <Slider label="高光" value="0.0" />
      <Slider label="阴影" value="0.0" />
      <Slider label="白色" value="0.0" />
      <Slider label="黑色" value="0.0" />
      <div className="pt-0.5">
        <Section title="创意" />
        <Section title="曲线" />
        <Section title="色轮和匹配" />
        <Section title="HSL 辅助" />
        <Section title="晕影" />
      </div>
      <div className="h-[79px] shrink-0 border-b-3 border-[#191919]" />
      <Collapsed title="元数据" />
      <Collapsed title="标记" />
      <Collapsed title="历史记录" />
      <Collapsed title="事件" />
      <Collapsed title="时间码" />
    </aside>
  );
}

function CapCut() {
  return (
    <Icon w={36} h={36}>
      <rect width="36" height="36" rx="8" fill="#000" />
      <path d="M8 12.500V10h14v3.500L8 21.500V26h14v-3.500L8 14.500M22 13.500l7-4M22 22.500l7 4M15 18l14-8M15 18l14 8" fill="none" stroke="#fff" strokeWidth="2.600" />
    </Icon>
  );
}

function Bird({ size = 36 }: { size?: number }) {
  return (
    <Icon w={size} h={size} vb="0 0 36 36">
      <defs>
        <linearGradient id="bird" x2="0" y2="1">
          <stop stopColor="#12a8ff" />
          <stop offset="1" stopColor="#0a5cff" />
        </linearGradient>
      </defs>
      <rect x="1" y="1" width="34" height="34" rx="9" fill="url(#bird)" />
      <path d="M10 7c7 3 15 6 16 12 0 3-2 5-4 5l1 2-8 5 2-5c-4 0-5-2-5-4l3 .500c-3-2-4-4-4-6l4 1.500c-3-3-5-7-5-11z" fill="#fff" />
    </Icon>
  );
}

function Penguin({ size = 36, bare }: { size?: number; bare?: boolean }) {
  return (
    <Icon w={size} h={size} vb="0 0 36 36">
      {!bare && <rect width="36" height="36" rx="7" fill="#fff" />}
      <path d="M18 4c6 0 8 5 8 10 3 4 5 8 4 13l-3-2c-1 4-4 7-9 7s-8-3-9-7l-3 2c-1-5 1-9 4-13 0-5 2-10 8-10z" fill="#111" />
      <ellipse cx="18" cy="25" rx="6.500" ry="7" fill="#fff" />
      <ellipse cx="15.500" cy="9.500" rx="1.800" ry="2.500" fill="#fff" />
      <ellipse cx="20.500" cy="9.500" rx="1.800" ry="2.500" fill="#fff" />
      <ellipse cx="18" cy="14" rx="5" ry="2" fill="#f5a11b" />
      <path d="M10 17c5 3 11 3 16 0l1 3c-3 2-7 3-10 3v5h-4v-6l-3-2z" fill="#e8232a" />
      <path d="M10 31h7v2h-7zM19 31h7v2h-7z" fill="#f5a11b" />
    </Icon>
  );
}

const TASKS: { label: string; mark?: "dot" | "active" | "wide"; icon: ReactNode }[] = [
  {
    label: "文件资源管理器",
    mark: "dot",
    icon: (
      <Icon w={36} h={36}>
        <path d="M0 4c0-1 1-2 2-2h9l4 4h-15z" fill="#d99a11" />
        <path d="M0 7h13l3-2h18c1 0 2 1 2 2v27H0z" fill="#fdc93d" />
        <path d="M6 34V26c0-2 1-3 3-3h18c2 0 3 1 3 3v8z" fill="#1674c8" />
        <path d="M11 28h14v2H11z" fill="#0b4687" />
      </Icon>
    ),
  },
  {
    label: "Google Chrome",
    mark: "dot",
    icon: (
      <Icon w={36} h={36}>
        <circle cx="18" cy="18" r="18" fill="#fbc516" />
        <path d="M2.400 9A18 18 0 0133.600 9H18l-8 13.500z" fill="#e63d30" />
        <path d="M2.400 9A18 18 0 0018 36l7.800-13.500H10.200z" fill="#2ca24c" />
        <circle cx="18" cy="18" r="9" fill="#fff" />
        <circle cx="18" cy="18" r="7" fill="#3479e8" />
      </Icon>
    ),
  },
  { label: "剪映", icon: <CapCut /> },
  { label: "飞书", mark: "dot", icon: <Bird /> },
  {
    label: "记事本",
    mark: "dot",
    icon: (
      <Icon w={30} h={36}>
        <rect y="2" width="30" height="31" rx="2" fill="#54bdd9" />
        <path d="M0 31h30v3H0z" fill="#fff" />
        <path d="M0 33h30v3H0z" fill="#b05e12" />
        <path d="M4 0v5M9.500 0v5M15 0v5M20.500 0v5M26 0v5M6 12h18M6 18h18M6 24h18" stroke="#0e5f80" strokeWidth="2.200" />
      </Icon>
    ),
  },
  {
    label: "Premiere Pro",
    mark: "active",
    icon: (
      <span className="flex size-[35px] items-center justify-center rounded-[7px] bg-[#00005b] text-[18px] font-bold text-[#9999ff]">
        Pr
      </span>
    ),
  },
  {
    label: "Clash",
    mark: "dot",
    icon: (
      <Icon w={36} h={36}>
        <defs>
          <linearGradient id="cat" x2="0" y2="1">
            <stop stopColor="#ff7fa5" />
            <stop offset="1" stopColor="#8f7dff" />
          </linearGradient>
        </defs>
        <circle cx="18" cy="18" r="18" fill="url(#cat)" />
        <path d="M9 8l6 5h6l6-5v11c0 5-4 9-9 9s-9-4-9-9z" fill="#fff" />
        <path d="M13 18l3 2-3 1zM23 18l-3 2 3 1zM16.500 24h3L18 26z" fill="#b070d8" />
      </Icon>
    ),
  },
  {
    label: "PotPlayer",
    mark: "wide",
    icon: (
      <span className="relative flex size-9 flex-col items-center justify-end rounded-sm bg-[#f7d117] pb-0.5">
        <Icon w={22} h={20} className="text-white">
          <circle cx="9" cy="9" r="9" />
          <path d="M7 5l6 4-6 4z" fill="#e0a800" />
        </Icon>
        <span className="text-[9px] leading-[10px] font-bold text-[#222222]">Player</span>
        <span className="absolute -top-2 -right-1.5 flex gap-0.5">
          <span className="h-6 w-2 rounded-full border-2 border-[#8a7a00] bg-[#e8c800]" />
          <span className="h-6 w-2 rounded-full border-2 border-[#8a7a00] bg-[#e8c800]" />
        </span>
      </span>
    ),
  },
  { label: "QQ", mark: "dot", icon: <Penguin /> },
  { label: "剪映专业版", mark: "dot", icon: <CapCut /> },
];

function Sogou({ size = 22 }: { size?: number }) {
  return (
    <Icon w={size} h={size} vb="0 0 22 22">
      <rect width="22" height="22" rx="5" fill="#f4511e" />
      <path
        d="M17 6.500C13 4 6 4 6 8s10 2.500 10 6.500S8 18 5 15.500"
        fill="none"
        stroke="#fff"
        strokeWidth="3"
        strokeLinecap="round"
      />
    </Icon>
  );
}

function ImeBar() {
  return (
    <div className="absolute right-[107px] bottom-full flex h-[38px] w-[280px] items-center justify-between rounded-md bg-white pr-2 pl-[36px] text-[#1d6fe0]">
      <span className="absolute -top-1 -left-5 -rotate-6">
        <Sogou size={44} />
      </span>
      <span className="text-[22px] leading-none font-medium">英</span>
      <Icon w={16} h={16}>
        <circle cx="3" cy="6" r="2.500" />
        <path d="M9 9h5v3l-3 4H9l1.500-3H9z" />
      </Icon>
      <Icon w={16} h={22}>
        <rect x="4" y="0" width="8" height="13" rx="4" />
        <path d="M1 9c0 9 14 9 14 0M8 16v5" fill="none" stroke="currentColor" strokeWidth="2" />
      </Icon>
      <Icon w={22} h={18}>
        <rect x="1" y="1" width="20" height="15" rx="2" fill="none" stroke="currentColor" strokeWidth="2" />
        <path d="M4 5h14M4 8.500h14M7 12.500h8" stroke="currentColor" strokeWidth="2" strokeDasharray="2.500 1.500" />
      </Icon>
      <Icon w={24} h={22} className="text-[#7a5cff]">
        <path d="M7 2c2 3 7 3 9 0l7 4-3 6-3-1v10H7V11l-3 1-3-6z" />
        <circle cx="21" cy="3" r="3" fill="#f5333f" />
      </Icon>
      <Icon w={20} h={20}>
        <path d="M1 1h8v8H1zM12 1h7v8h-7zM1 12h8v7H1zM12 12h7v7h-7z" />
      </Icon>
      <Icon w={26} h={18}>
        <path d="M2 6l14-4 8 5-4 8-12 1z" fill="#f47b20" />
        <circle cx="9" cy="9" r="3" fill="#5a1d0a" />
        <circle cx="19" cy="8" r="3" fill="#d02b20" />
      </Icon>
    </div>
  );
}

function Taskbar() {
  return (
    <footer className="relative flex h-[72px] shrink-0 items-center border-t-2 border-[#b9cdd6] bg-gradient-to-r from-[#cbe4ee] via-[#cde3ec] to-[#d6e6f2] text-[#1f1f1f]">
      <div className="w-[36.56%] shrink-0" />
      <button aria-label="开始" className="text-[#0f7fdb]">
        <Icon w={36} h={36}>
          <path d="M0 2c0-1 1-2 2-2h15v17H0zM19 0h15c1 0 2 1 2 2v15H19zM0 19h17v17H2c-1 0-2-1-2-2zM19 19h17v15c0 1-1 2-2 2H19z" />
        </Icon>
      </button>
      <label className="ml-[21px] flex h-[46px] w-[327px] items-center rounded-full border border-[#b7ccd5] bg-[#f2f8fb] pr-3 pl-3.5">
        <Icon w={14} h={14} className="text-[#11568f]">
          <path d="M8 0c-3 3-3 5 3 12" fill="none" stroke="currentColor" strokeWidth="3" />
          <path d="M0 5l6-5v5z" fill="#1b2b38" />
        </Icon>
        <input
          type="text"
          aria-label="搜索"
          placeholder="搜索"
          className="ml-[25px] w-[150px] bg-transparent text-[21px] leading-none outline-none placeholder:text-[#5c6166]"
        />
        <Icon w={60} h={30} className="ml-auto">
          <path d="M24 2c1 8 4 11 12 13-8 2-11 5-12 13-1-8-4-11-12-13 8-2 11-5 12-13z" fill="#f8b51c" />
          <path d="M46 11c.500 4 2 6 6 7-4 1-5.500 3-6 7-.500-4-2-6-6-7 4-1 5.500-3 6-7z" fill="#fac63c" />
          <path d="M5 17l2 4 3 1-3 2-1 4-3-3-3-1 4-3z" fill="#18a4e0" />
          <circle cx="40" cy="4" r="2.500" fill="#f0602c" />
          <circle cx="57" cy="23" r="2.500" fill="#6bb544" />
        </Icon>
      </label>
      <div className="ml-1 flex h-full items-center">
        {TASKS.map((t) => (
          <button
            key={t.label}
            aria-label={t.label}
            className={clsx(
              "relative mx-[5px] flex h-[58px] w-14 items-center justify-center rounded-md",
              t.mark === "active" && "border border-[#c3d6df] bg-[#e3eff6]",
            )}
          >
            {t.icon}
            {t.mark === "dot" && <span className="absolute -bottom-1 size-2 rounded-full bg-[#6f7d85]" />}
            {t.mark === "active" && <span className="absolute bottom-0 h-1 w-6 rounded-full bg-[#0f7fdb]" />}
            {t.mark === "wide" && <span className="absolute -bottom-0.5 h-1 w-[34px] rounded-full bg-[#9a5b0c]" />}
          </button>
        ))}
      </div>
      <div className="ml-auto flex items-center gap-[25px] pr-[30px]">
        <Icon w={18} h={12}>
          <path d="M2 10l7-7 7 7" fill="none" stroke="currentColor" strokeWidth="1.800" />
        </Icon>
        <Icon w={22} h={24}>
          <path d="M11 1l10 3v8c0 6-5 9-10 11C6 21 1 18 1 12V4z" fill="#2b6be4" />
          <circle cx="11" cy="11" r="5" fill="none" stroke="#fff" strokeWidth="2" />
          <circle cx="11" cy="11" r="1.500" fill="#fff" />
        </Icon>
        <Bird size={24} />
        <Penguin size={24} bare />
        <Icon w={24} h={24}>
          <path d="M4 10a8 8 0 0115-3M20 14a8 8 0 01-15 3" fill="none" stroke="#3b4146" strokeWidth="2" />
          <path d="M20 2v6h-6zM4 22v-6h6z" fill="#3b4146" />
          <circle cx="19" cy="19" r="4" fill="#f08a1d" />
        </Icon>
        <span className="text-[22px] leading-none text-[#8b969c]">英</span>
        <span className="ml-2">
          <Sogou />
        </span>
        <Icon w={26} h={24} className="ml-2">
          <path d="M1 4h16v13H1zM5 21h8M9 17v4M20 2v7M24 2v7M18 9h8v4c0 3-8 3-8 0zM22 15v6" fill="none" stroke="currentColor" strokeWidth="1.700" />
        </Icon>
        <Icon w={22} h={20} className="-ml-3">
          <path d="M1 7h4l6-5v16l-6-5H1zM14 6c2 2 2 6 0 8M17 3c4 4 4 10 0 14" fill="none" stroke="currentColor" strokeWidth="1.600" />
        </Icon>
        <div className="text-right text-[17px] leading-6">
          <p>15:17</p>
          <p>2025/6/6</p>
        </div>
      </div>
      <ImeBar />
    </footer>
  );
}

export default function App() {
  return (
    <div className="flex h-screen flex-col overflow-hidden bg-[#161616] font-['Noto_Sans','Noto_Sans_CJK_SC',sans-serif] text-[16px]">
      <TitleBar />
      <WorkspaceBar />
      <main className="flex min-h-0 flex-1 gap-1.5 px-0.5 pt-[3px] pb-0.5">
        <div className="flex min-w-0 flex-1 flex-col gap-1.5">
          <div className="grid min-h-0 flex-[1199] grid-cols-[862fr_2355fr] grid-rows-1 gap-1.5">
            <EffectControls />
            <ProgramMonitor />
          </div>
          <div className="grid min-h-0 flex-[729] grid-cols-[913fr_75px_2095fr_122px] grid-rows-1 gap-1.5">
            <ProjectPanel />
            <ToolStrip />
            <Timeline />
            <AudioMeters />
          </div>
        </div>
        <LumetriStack />
      </main>
      <div className="flex h-[31px] shrink-0 items-center bg-[#262626] pl-1 text-[#b0b0b0]">
        <Icon w={24} h={22}>
          <path d="M7 4c8-6 17 0 16 8-1 9-10 11-16 7-6 0-8-7-5-11 1-2 3-4 5-4z" fill="none" stroke="currentColor" strokeWidth="1.800" />
          <path d="M6 16c-3-3-2-7 1-8 4-1 5 3 7 6 1 2 3 3 5 1M9 7c4-4 11-1 10 5-1 5-7 5-9 2" fill="none" stroke="currentColor" strokeWidth="2.600" />
        </Icon>
      </div>
      <Taskbar />
    </div>
  );
}
